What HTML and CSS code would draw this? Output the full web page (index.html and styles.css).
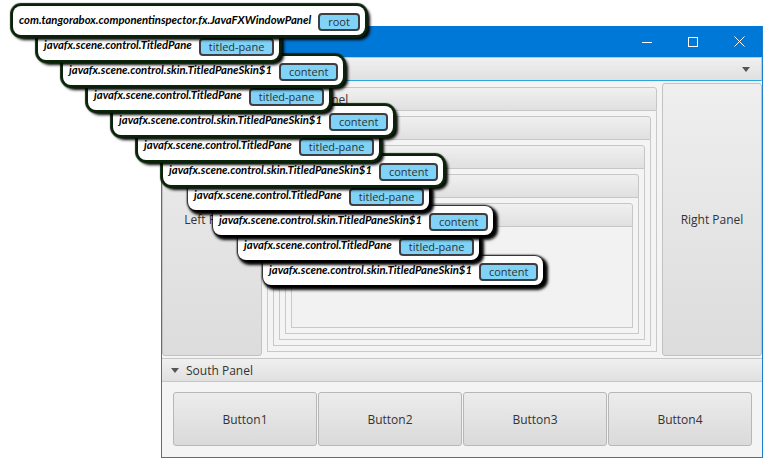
FILE: index.html
```html
<!DOCTYPE html>
<html lang="en">
<head>
    <meta charset="UTF-8">
    <title>Component Inspector</title>
    <link rel="stylesheet" href="styles.css">
</head>
<body>
    <!-- inspector overlay: one label per node, depth drives the indent -->
    <div class="inspector">
        <div class="node glow" style="--d:0"><span class="cls">com.tangorabox.componentinspector.fx.JavaFXWindowPanel</span><span class="tag">root</span></div>
        <div class="node glow" style="--d:1"><span class="cls">javafx.scene.control.TitledPane</span><span class="tag">titled-pane</span></div>
        <div class="node glow" style="--d:2"><span class="cls">javafx.scene.control.skin.TitledPaneSkin$1</span><span class="tag">content</span></div>
        <div class="node glow" style="--d:3"><span class="cls">javafx.scene.control.TitledPane</span><span class="tag">titled-pane</span></div>
        <div class="node glow" style="--d:4"><span class="cls">javafx.scene.control.skin.TitledPaneSkin$1</span><span class="tag">content</span></div>
        <div class="node glow" style="--d:5"><span class="cls">javafx.scene.control.TitledPane</span><span class="tag">titled-pane</span></div>
        <div class="node glow" style="--d:6"><span class="cls">javafx.scene.control.skin.TitledPaneSkin$1</span><span class="tag">content</span></div>
        <div class="node" style="--d:7"><span class="cls">javafx.scene.control.TitledPane</span><span class="tag">titled-pane</span></div>
        <div class="node" style="--d:8"><span class="cls">javafx.scene.control.skin.TitledPaneSkin$1</span><span class="tag">content</span></div>
        <div class="node" style="--d:9"><span class="cls">javafx.scene.control.TitledPane</span><span class="tag">titled-pane</span></div>
        <div class="node" style="--d:10"><span class="cls">javafx.scene.control.skin.TitledPaneSkin$1</span><span class="tag">content</span></div>
    </div>

    <div class="window">
        <div class="titlebar">
            <span class="win-btn">
                <svg width="10" height="10" viewBox="0 0 10 10"><path d="M0 5.5h10" stroke="#fff" stroke-width="1"/></svg>
            </span>
            <span class="win-btn">
                <svg width="10" height="10" viewBox="0 0 10 10"><rect x="0.5" y="0.5" width="9" height="9" fill="none" stroke="#fff" stroke-width="1"/></svg>
            </span>
            <span class="win-btn">
                <svg width="11" height="11" viewBox="0 0 11 11"><path d="M0.5 0.5l10 10M10.5 0.5l-10 10" stroke="#fff" stroke-width="1"/></svg>
            </span>
        </div>

        <div class="tp-head focused">
            <span class="grow"></span>
            <span class="arrow"></span>
        </div>

        <div class="frame">
            <div class="main">
                <div class="side">Left Panel</div>

                <div class="center">
                    <div class="tp">
                        <div class="tp-head"><span class="arrow"></span>Top Panel</div>
                        <div class="tp-body">
                            <div class="tp">
                                <div class="tp-head"></div>
                                <div class="tp-body">
                                    <div class="tp">
                                        <div class="tp-head"></div>
                                        <div class="tp-body">
                                            <div class="tp">
                                                <div class="tp-head"></div>
                                                <div class="tp-body">
                                                    <div class="tp">
                                                        <div class="tp-head"></div>
                                                        <div class="tp-body empty"></div>
                                                    </div>
                                                </div>
                                            </div>
                                        </div>
                                    </div>
                                </div>
                            </div>
                        </div>
                    </div>
                </div>

                <div class="side">Right Panel</div>
            </div>

            <div class="tp-head south"><span class="arrow"></span>South Panel</div>
            <div class="buttons">
                <button class="fx-button">Button1</button>
                <button class="fx-button">Button2</button>
                <button class="fx-button">Button3</button>
                <button class="fx-button">Button4</button>
            </div>
        </div>
    </div>
</body>
</html>
```

FILE: styles.css
```css
body {
    margin: 0;
    background: #fff;
    font-family: "Open Sans", "Liberation Sans", sans-serif;
    font-size: 12px;
    color: #333;
}

/* ---------- inspector labels ---------- */

.inspector {
    position: absolute;
    top: 6px;
    left: 13px;
    z-index: 50;
}

.node {
    position: relative;
    z-index: calc(20 - var(--d));
    display: flex;
    align-items: flex-start;
    width: max-content;
    height: 29px;
    box-sizing: border-box;
    margin-left: calc(var(--d) * 25px);
    margin-top: -4px;
    padding: 0 5px 0 6px;
    background: #fff;
    border-radius: 8px;
    box-shadow: 0 0 2px 1px #000, 3px 3px 3px 2px #000;
}

.node:first-child {
    margin-top: 0;
}

.node.glow {
    box-shadow: 0 0 1px 3px #0a240a, 3px 3px 3px 2px #000;
}

.cls {
    font-family: "Lato", "Liberation Sans", sans-serif;
    font-style: italic;
    font-weight: 700;
    font-size: 11.3px;
    line-height: 13px;
    padding-top: 7px;
    color: #000;
}

.tag {
    margin: 7px 0 0 7px;
    height: 18px;
    box-sizing: border-box;
    padding: 0 8px;
    background: #80d3f6;
    border: 2px solid #3c4044;
    border-radius: 4px;
    font-family: "Open Sans", sans-serif;
    font-size: 11px;
    line-height: 14px;
    color: #2b3338;
}

/* ---------- window ---------- */

.window {
    width: 602px;
    height: 432px;
    box-sizing: border-box;
    margin: 26px 0 0 161px;
    border: 1px solid #1a7fd0;
    border-top: none;
    background: #f4f4f4;
    display: flex;
    flex-direction: column;
}

.titlebar {
    height: 31px;
    background: #0078d7;
    display: flex;
    justify-content: flex-end;
    align-items: center;
}

.win-btn {
    width: 46px;
    display: flex;
    justify-content: center;
    align-items: center;
}

.tp-head {
    height: 24px;
    box-sizing: border-box;
    display: flex;
    align-items: center;
    padding: 0 8px 0 10px;
    background: linear-gradient(#f0f0f0, #e0e0e0);
    border: 1px solid #c6c6c6;
    border-radius: 3px 3px 0 0;
    color: #333;
}

.tp-head .arrow {
    width: 0;
    height: 0;
    border-left: 4px solid transparent;
    border-right: 4px solid transparent;
    border-top: 5px solid #555;
    margin-right: 7px;
}

.tp-head.focused {
    border: 1px solid #9fd3ef;
    border-bottom-color: #2aa6e0;
    border-radius: 0;
}

.tp-head.focused .arrow {
    margin-right: 3px;
}

.grow {
    flex: 1;
}

.frame {
    flex: 1;
    display: flex;
    flex-direction: column;
}

.main {
    height: 277px;
    box-sizing: border-box;
    padding: 2px 0;
    display: flex;
}

.side {
    width: 100px;
    box-sizing: border-box;
    display: flex;
    justify-content: center;
    align-items: center;
    background: linear-gradient(#efefef, #dcdcdc);
    border: 1px solid #c2c2c2;
    border-radius: 3px;
    color: #333;
}

.center {
    flex: 1;
    padding: 4px 5px;
    display: flex;
}

.tp {
    flex: 1;
    display: flex;
    flex-direction: column;
}

.tp-body {
    flex: 1;
    display: flex;
    padding: 5px;
    background: #f4f4f4;
    border: 1px solid #c9c9c9;
    border-top: none;
}

.tp-body.empty {
    padding: 0;
    background: #f2f2f2;
}

.tp-head.south {
    border-left: none;
    border-right: none;
    border-radius: 0;
    padding-left: 9px;
}

.buttons {
    flex: 1;
    display: flex;
    gap: 1px;
    padding: 10px 10px 10px 11px;
}

.fx-button {
    flex: 1;
    height: 54px;
    background: linear-gradient(#ececec, #dadada);
    border: 1px solid #b7b7b7;
    border-radius: 3px;
    font-family: "Open Sans", sans-serif;
    font-size: 12px;
    color: #333;
}
```
